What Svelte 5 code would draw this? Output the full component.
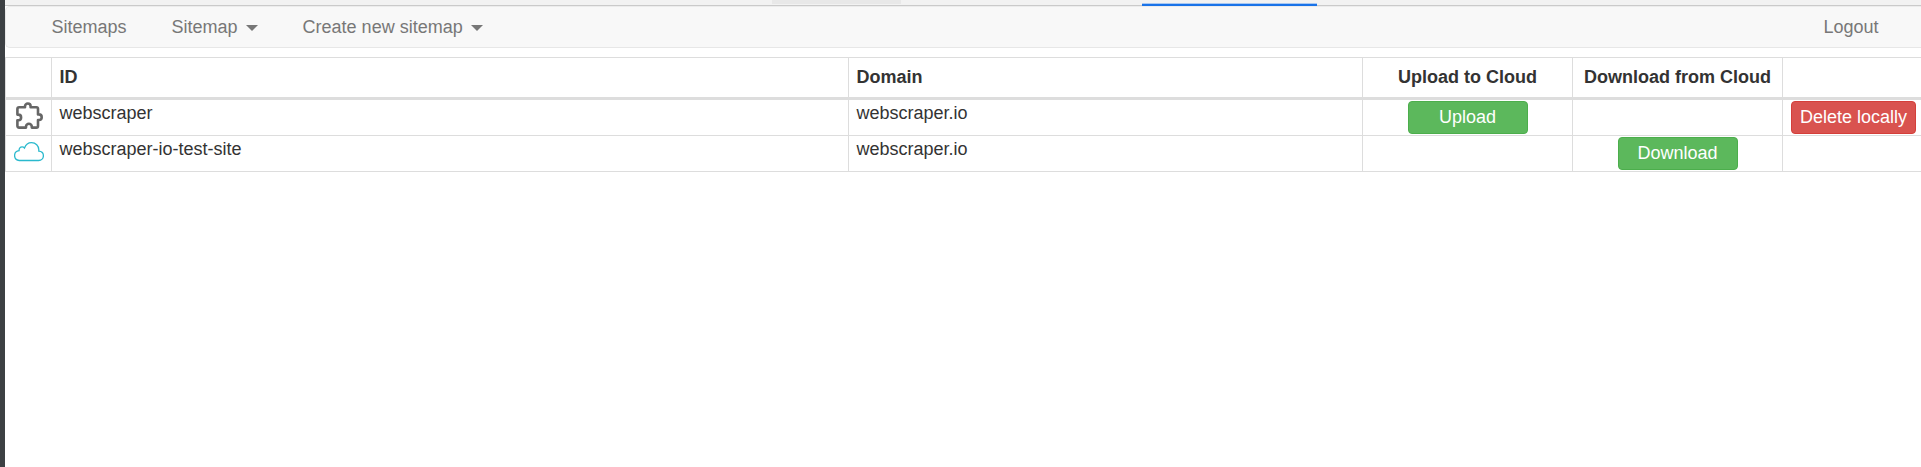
<script>
  const rows = [
    { id: 'webscraper', domain: 'webscraper.io', local: true },
    { id: 'webscraper-io-test-site', domain: 'webscraper.io', local: false }
  ];
</script>

<div class="shell">
  <div class="edge"></div>
  <main>
    <div class="strip"><span class="hovered"></span><span class="active"></span></div>
    <nav>
      <a class="sitemaps">Sitemaps</a>
      <a class="sitemap">Sitemap <i class="caret"></i></a>
      <a class="create">Create new sitemap <i class="caret"></i></a>
      <a class="logout">Logout</a>
    </nav>
    <section class="table">
      <div class="row head">
        <div></div>
        <div>ID</div>
        <div>Domain</div>
        <div class="center">Upload to Cloud</div>
        <div class="center">Download from Cloud</div>
        <div></div>
      </div>
      {#each rows as row}
        <div class="row">
          <div class="icon">
            {#if row.local}
              <svg class="puzzle" width="28" height="28" viewBox="0 0 28 28">
                <path d="M4.2 5.2H10V4.3a2.8 2.8 0 0 1 5.6 0V5.2H21.4a1.6 1.6 0 0 1 1.6 1.6V12.4H23.9a2.8 2.8 0 0 1 0 5.6H23V24a1.6 1.6 0 0 1-1.6 1.6H16.8V24.7a2.9 2.9 0 0 0-5.8 0V25.6H4.2a1.8 1.8 0 0 1-1.8-1.8V18.2H3.3a2.8 2.8 0 0 0 0-5.6H2.4V7a1.8 1.8 0 0 1 1.8-1.8Z" fill="none" stroke="#666" stroke-width="2.6" stroke-linejoin="round" />
              </svg>
            {:else}
              <svg class="cloud" width="30" height="20" viewBox="0 0 30 20">
                <path d="M5.2 18.5C2.6 18.2.6 16.2.6 13.6C.6 11 2.5 9 5.1 8.7C4.9 6.2 6.3 4.9 8.1 4.9C9.1 4.9 9.9 5.3 10.5 6C11.7 2.8 14.2.7 17.5.7C21.7.7 24.8 3.8 24.8 7.8V9.2C27.6 9.4 29.4 11.3 29.4 13.8C29.4 16.5 27.4 18.5 24.7 18.5Z" fill="none" stroke="#2ab9cd" stroke-width="1.3" />
              </svg>
            {/if}
          </div>
          <div>{row.id}</div>
          <div>{row.domain}</div>
          <div class="center">{#if row.local}<button>Upload</button>{/if}</div>
          <div class="center">{#if !row.local}<button>Download</button>{/if}</div>
          <div class="last">{#if row.local}<button class="danger">Delete locally</button>{/if}</div>
        </div>
      {/each}
    </section>
  </main>
</div>

<style>
  :global(body) { background: #fff; overflow: hidden; }
  .shell {
    display: flex;
    height: 467px;
    font: 18px/26px "Liberation Sans", Arial, sans-serif;
    color: #333;
  }
  .edge { width: 5px; background: #3c4043; flex: none; }
  main { flex: 1; min-width: 0; }
  .strip {
    position: relative;
    box-sizing: border-box;
    height: 6px;
    background: #f2f2f2;
    border-bottom: 1px solid #cacaca;
  }
  .hovered { position: absolute; left: 767px; top: 0; width: 129px; height: 4px; background: #e8e8e8; }
  .active { position: absolute; left: 1137px; top: 3px; width: 175px; height: 3px; background: linear-gradient(#a9c8f2 1px, #1a73e8 1px); }
  nav {
    box-sizing: border-box;
    display: flex;
    height: 42px;
    padding: 7px 42.5px 0 45.5px;
    background: #f8f8f8;
    border: 1px solid #e7e7e7;
    border-top-color: #ececec;
    border-right: 0;
    border-radius: 5px 0 0 5px;
    color: #777;
  }
  .sitemap { margin-left: 45px; }
  .create { margin-left: 44.5px; }
  .logout { margin-left: auto; }
  .caret {
    display: inline-block;
    margin-left: 3.5px;
    vertical-align: 2px;
    border: 6px solid transparent;
    border-top-color: #777;
    border-bottom: 0;
  }
  .create .caret { margin-left: 3px; }
  .table { margin-top: 9px; }
  .row {
    display: grid;
    grid-template-columns: 46px 797px 514px 210px 210px 1fr;
    height: 36px;
    border-bottom: 1px solid #ddd;
    box-sizing: border-box;
  }
  .row > div { border-left: 1px solid #ddd; padding-left: 7.5px; box-sizing: border-box; white-space: nowrap; }
  .head { height: 43px; border-top: 1px solid #ddd; border-bottom: 3px solid #ddd; font-weight: bold; line-height: 38px; }
  .row > .center { padding: 0; text-align: center; }
  .row > .icon { padding: 0; }
  .row > .last { padding-left: 8px; }
  svg { display: block; }
  .puzzle { margin: 2px 0 0 9px; }
  .cloud { margin: 6px 0 0 8px; }
  button {
    display: block;
    box-sizing: border-box;
    width: 120px;
    height: 33px;
    margin: 1px auto 0;
    padding: 0 0 1px;
    border: 1px solid #4cae4c;
    border-radius: 4px;
    background: #5cb85c;
    color: #fff;
    font: 18px/28px "Liberation Sans", Arial, sans-serif;
  }
  .danger { width: 125px; margin-left: 0; background: #d9534f; border-color: #d43f3a; }
</style>
